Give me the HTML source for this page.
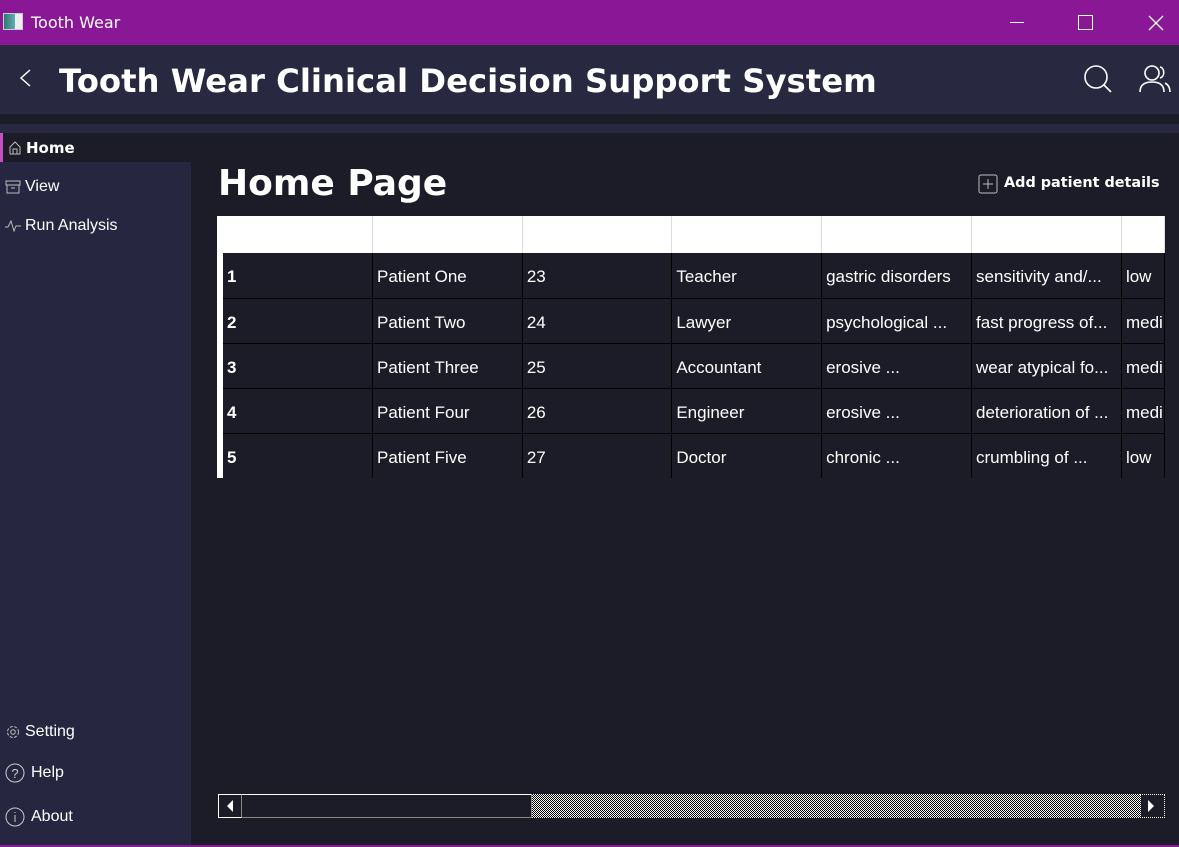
<!DOCTYPE html><html><head><style>
*{margin:0;padding:0;box-sizing:border-box}
body{width:1179px;height:847px;background:#1c1c28;font-family:"Liberation Sans","DejaVu Sans",sans-serif;color:#fff;position:relative;overflow:hidden}
.abs{position:absolute}
.tb{left:0;top:0;width:1179px;height:45px;background:#8a1896}
.hd{left:0;top:45px;width:1179px;height:69px;background:#282840}
.s1{left:0;top:124px;width:1179px;height:9px;background:#282840}
.side{left:0;top:162px;width:191px;height:683px;background:#272640}
.nav{font-size:16px;display:flex;align-items:center;gap:4px}
table{border-collapse:collapse;position:absolute;left:223px;top:216px;font-size:17px}
td{width:150px;height:45px;border-right:1px solid #000;border-bottom:1px solid #000;padding-left:4px;padding-top:4px;white-space:nowrap;overflow:hidden}
tr.h td{background:#fff;height:37px;border-right:1px solid #ddd;border-bottom:none}
td.last{width:43px}
</style></head><body>
<div class="abs tb"></div>
<div class="abs" style="left:3px;top:13px;width:20px;height:17px;border:1px solid #ccc;background:linear-gradient(90deg,#2a7a6a,#6ab 60%,#eee 60%)"></div>
<div class="abs" style="left:31px;top:13px;font-family:'DejaVu Sans',sans-serif;font-size:16px">Tooth Wear</div>
<div class="abs" style="left:1010px;top:22px;width:14px;height:1px;background:#fff"></div>
<div class="abs" style="left:1078px;top:15px;width:15px;height:15px;border:1px solid #fff"></div>
<svg class="abs" style="left:1148px;top:15px" width="16" height="16"><path d="M1 1L15 15M15 1L1 15" stroke="#fff" stroke-width="1.3"/></svg>
<div class="abs hd"></div>
<svg class="abs" style="left:18px;top:68px" width="14" height="20"><path d="M12 2L3 10L12 18" stroke="#fff" fill="none" stroke-width="1.5"/></svg>
<div class="abs" style="left:59px;top:62px;font-size:32.3px;font-weight:bold;font-family:'DejaVu Sans',sans-serif">Tooth Wear Clinical Decision Support System</div>
<svg class="abs" style="left:1083px;top:64px" width="30" height="30"><circle cx="13" cy="13" r="11" stroke="#fff" stroke-width="1.6" fill="none"/><path d="M21 21L28 28" stroke="#fff" stroke-width="1.6"/></svg>
<svg class="abs" style="left:1138px;top:64px" width="34" height="30"><circle cx="14" cy="9" r="7" stroke="#fff" stroke-width="1.6" fill="none"/><path d="M2 28C2 20 8 18 14 18C20 18 26 20 26 28M22 3C27 4 27 13 22 14M27 19C31 21 32 24 32 28" stroke="#fff" stroke-width="1.6" fill="none"/></svg>
<div class="abs s1"></div>
<div class="abs" style="left:0;top:133px;width:3px;height:29px;background:#c450c4"></div>
<div class="abs nav" style="left:8px;top:139px;font-weight:bold;font-family:'DejaVu Sans',sans-serif;font-size:15px"><svg width="14" height="14"><path d="M2 13V6L7 1L12 6V13H2M5 13V8H9V13" stroke="#bbb" fill="none"/></svg>Home</div>
<div class="abs side"></div>
<div class="abs nav" style="left:5px;top:178px"><svg width="16" height="14"><rect x="1" y="1" width="14" height="4" stroke="#bbb" fill="none"/><path d="M2 5V13H14V5M6 8H10" stroke="#bbb" fill="none"/></svg>View</div>
<div class="abs nav" style="left:5px;top:217px"><svg width="16" height="14"><path d="M0 8H3L6 2L9 12L11 7H16" stroke="#bbb" fill="none"/></svg>Run Analysis</div>
<div class="abs nav" style="left:5px;top:723px"><svg width="16" height="16"><circle cx="8" cy="8" r="5.5" stroke="#bbb" fill="none" stroke-dasharray="3 1.5"/><circle cx="8" cy="8" r="2.3" stroke="#bbb" fill="none"/></svg>Setting</div>
<div class="abs nav" style="left:5px;top:763px;gap:6px"><svg width="20" height="20"><circle cx="10" cy="10" r="9" stroke="#ccc" fill="none"/><text x="10" y="15" font-size="13" fill="#ccc" text-anchor="middle">?</text></svg>Help</div>
<div class="abs nav" style="left:5px;top:807px;gap:6px"><svg width="20" height="20"><circle cx="10" cy="10" r="9" stroke="#ccc" fill="none"/><path d="M10 8V15M10 5V6" stroke="#ccc"/></svg>About</div>
<div class="abs" style="left:0;top:845px;width:1179px;height:2px;background:#8a1896"></div>
<div class="abs" style="left:218px;top:163px;font-size:36px;font-weight:bold;font-family:'DejaVu Sans',sans-serif">Home Page</div>
<svg class="abs" style="left:978px;top:174px" width="20" height="20"><rect x="1" y="1" width="18" height="18" rx="2" stroke="#bbb" fill="none"/><path d="M10 5V15M5 10H15" stroke="#bbb"/></svg>
<div class="abs" style="left:1004px;top:175px;font-size:14.4px;font-weight:bold;font-family:'DejaVu Sans',sans-serif">Add patient details</div>
<div class="abs" style="left:217px;top:216px;width:6px;height:262px;background:#fff"></div>
<div class="abs" style="left:223px;top:216px;width:942px;height:262px;overflow:hidden">
<table style="left:0;top:0">
<tr class="h"><td></td><td></td><td></td><td></td><td></td><td></td><td class="last"></td></tr>
<tr><td><b>1</b></td><td>Patient One</td><td>23</td><td>Teacher</td><td>gastric disorders</td><td>sensitivity and/...</td><td class="last">low</td></tr>
<tr><td><b>2</b></td><td>Patient Two</td><td>24</td><td>Lawyer</td><td>psychological ...</td><td>fast progress of...</td><td class="last">medi</td></tr>
<tr><td><b>3</b></td><td>Patient Three</td><td>25</td><td>Accountant</td><td>erosive ...</td><td>wear atypical fo...</td><td class="last">medi</td></tr>
<tr><td><b>4</b></td><td>Patient Four</td><td>26</td><td>Engineer</td><td>erosive ...</td><td>deterioration of ...</td><td class="last">medi</td></tr>
<tr><td><b>5</b></td><td>Patient Five</td><td>27</td><td>Doctor</td><td>chronic ...</td><td>crumbling of ...</td><td class="last">low</td></tr>
</table></div>
<div class="abs" style="left:218px;top:794px;width:947px;height:24px;background:repeating-conic-gradient(#fff 0 25%,#000 0 50%) 0 0/2px 2px"></div>
<div class="abs" style="left:218px;top:794px;width:24px;height:24px;background:#1c1c28;border:1px solid #fff;border-right-color:#888"></div>
<svg class="abs" style="left:225px;top:799px" width="10" height="14"><path d="M8 1L2 7L8 13Z" fill="#fff"/></svg>
<div class="abs" style="left:242px;top:794px;width:290px;height:24px;background:#1c1c28;border-top:1px solid #fff;border-bottom:1px solid #888;border-right:1px solid #888"></div>
<div class="abs" style="left:1140px;top:794px;width:25px;height:24px;background:#1c1c28;border:1px dotted #fff"></div>
<svg class="abs" style="left:1146px;top:799px" width="10" height="14"><path d="M2 1L8 7L2 13Z" fill="#fff"/></svg>
</body></html>
